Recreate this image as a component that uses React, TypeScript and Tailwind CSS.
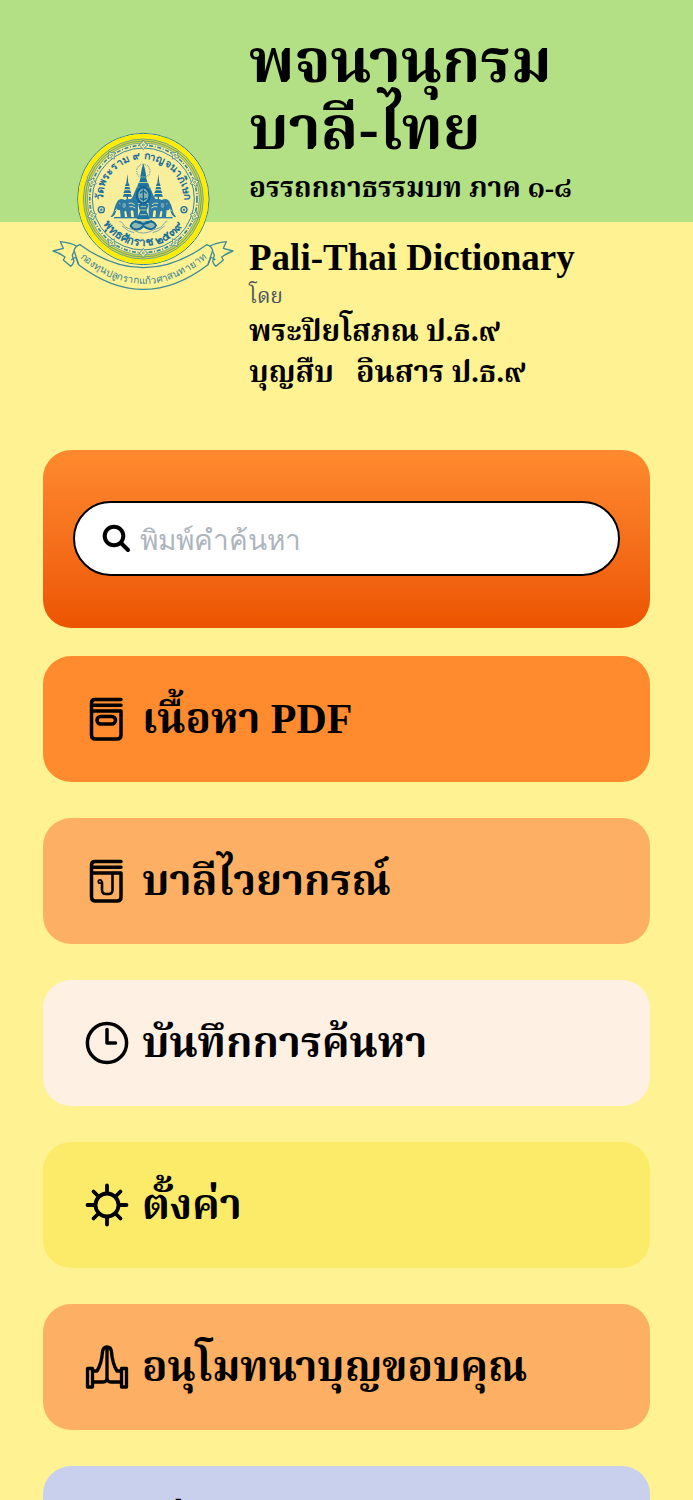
import React from "react";

const RIM_DOTS = Array.from({ length: 10 }, (_, i) => i * 36);

function Stupa({ x }: { x: number }) {
  return (
    <g transform={`translate(${x} 0)`} fill="#1d72a0">
      <path d="M0 162 L3 190 L-3 190 Z" />
      <path d="M-4 190h8l3 8h-14z M-6 201h12l3 7h-18z M-8 211h16l4 8h-24z M-10 222h20l4 8h-28z" />
      <path d="M-2 228h4v20h-4z" />
    </g>
  );
}

function Elephant({ flip }: { flip?: boolean }) {
  return (
    <g transform={flip ? "translate(620 0) scale(-1 1)" : undefined}>
      <path
        d="M230 248c4-12 16-14 24-8 14-6 30-2 40 10v42h-12l-2-18c-3-5-7-3-8 1l2 17h-12l-3-16c-2-5-5-4-6 0l2 16h-13l-2-22c-6 2-9-1-10-6-1 10-3 20-12 26-5 3-8 0-4-3 9-9 8-26 16-39z"
        fill="#2b7ba5"
      />
      <path d="M250 246q12 2 9 14-5 10-12 4-5-8 3-18z" fill="#6ea5b2" stroke="#0f6398" strokeWidth="2" />
      <path d="M266 250q10-3 18 4M268 260q10-2 18 4M238 250l3 2M230 268l-6 6" fill="none" stroke="#f7edb0" strokeWidth="2.500" />
      <path d="M222 293h76" stroke="#2b7ba5" strokeWidth="4" />
    </g>
  );
}

function Emblem() {
  return (
    <svg viewBox="36 36 546 474" className="mt-[132px] w-[182px] shrink-0" role="img" aria-label="ตราวัดพระราม ๙ กาญจนาภิเษก">
      <defs>
        <path id="arc-top" d="M190 262 A122 122 0 1 1 430 262" />
        <path id="arc-bottom" d="M168 237 A142 142 0 0 0 452 237" />
        <path id="arc-ribbon" d="M106 402 Q310 582 514 402" />
      </defs>
      <circle cx="310" cy="237" r="197" fill="#f8ee9c" stroke="#2a7f93" strokeWidth="3" />
      <circle cx="310" cy="237" r="188" fill="none" stroke="#ffec00" strokeWidth="14" />
      <circle cx="310" cy="237" r="174" fill="none" stroke="#d5d83b" strokeWidth="12" />
      <g fill="none" stroke="#3a8798">
        <circle cx="310" cy="237" r="180" strokeWidth="2" />
        <circle cx="310" cy="237" r="174" strokeWidth="2" />
        <circle cx="310" cy="237" r="168" strokeWidth="2" />
        <circle cx="310" cy="237" r="161" strokeWidth="5" strokeDasharray="12 5 3 5" />
        <circle cx="310" cy="237" r="153" strokeWidth="3" />
      </g>
      {RIM_DOTS.map((a) => (
        <g key={a} transform={`rotate(${a} 310 237)`} fill="#f8ee9c" stroke="#2f7f9f" strokeWidth="2">
          <path d="M310 61l6 9 8 5-8 5-6 9-6-9-8-5 8-5z" />
          <circle cx="310" cy="75" r="3" />
        </g>
      ))}
      <g fill="#1b6f9c" fontFamily="'Noto Sans', sans-serif" fontWeight="700">
        <text textAnchor="middle" fontSize="31">
          <textPath href="#arc-top" startOffset="50%">วัดพระราม ๙ กาญจนาภิเษก</textPath>
        </text>
        <text textAnchor="middle" fontSize="35">
          <textPath href="#arc-bottom" startOffset="50%">พุทธศักราช ๒๕๓๙</textPath>
        </text>
      </g>
      {[184, 432].map((x) => (
        <g key={x} fill="none" stroke="#1f729b">
          <circle cx={x} cy="269" r="9" strokeWidth="4" />
          <circle cx={x} cy="269" r="3" fill="#1f729b" />
        </g>
      ))}
      <circle cx="310" cy="153" r="20" fill="none" stroke="#5d9aab" strokeWidth="4" strokeDasharray="2 3" />
      <path d="M310 130l5 18 4 22h-18l4-22z" fill="#1f749f" />
      <path d="M302 172h16l4 14h-24z M296 188h28l5 14h-38z" fill="#1f749f" />
      <path d="M290 202h40l12 28 14 20h-92l14-20z" fill="#2b7ba5" />
      <ellipse cx="310" cy="226" rx="19" ry="24" fill="#83b3ad" stroke="#0f6398" strokeWidth="7" />
      <path d="M310 208v36M300 220q10-12 20 0M300 234q10 8 20 0" fill="none" stroke="#0f6398" strokeWidth="4" />
      <Stupa x={262} />
      <Stupa x={355} />
      <Elephant />
      <Elephant flip />
      <path d="M294 252h32l-6 22 10 24h-40l10-24z" fill="#1f749f" />
      <path d="M302 260h16M300 270h20M300 284h20" stroke="#f7edb0" strokeWidth="2" />
      <path
        d="M272 318c6-18 26-16 38-4 12-12 30-14 38 2-8 16-24 14-38 2-12 14-30 14-38 0zM284 302q26 18 52 0"
        fill="#8dbab0"
        stroke="#17699a"
        strokeWidth="6"
      />
      <path
        d="M238 304c12 2 10 12 20 18s20 4 30 12q22 10 44 0c10-8 20-6 30-12s8-16 20-18M246 318q20 18 36 20M374 318q-20 18-36 20"
        fill="none"
        stroke="#83aaa5"
        strokeWidth="3"
      />
      <g fill="#fff292" stroke="#3d8a9a" strokeWidth="4" strokeLinejoin="round">
        <path d="M120 374q-16 12-23 32l5 18q-4 12-10 15l-22-19 5-9q-17-12-36-18l31-8-9-20q32 3 51 15z" />
        <path d="M500 374q16 12 23 32l-5 18q4 12 10 15l22-19-5-9q17-12 34-18l-29-8 9-20q-32 3-51 15z" />
        <path d="M120 374Q310 512 500 374q14 4 18 17l-14 43Q310 582 116 434l-14-43q4-13 18-17z" />
        <path d="M116 434l-8-21q-8-1-14 7M504 434l8-21q8-1 14 7" fill="none" />
      </g>
      <text fill="#347f99" fontFamily="'Noto Sans', sans-serif" fontSize="30" fontWeight="500" textAnchor="middle">
        <textPath href="#arc-ribbon" startOffset="50%">กองทุนปลูกรากแก้วศาสนทายาท</textPath>
      </text>
    </svg>
  );
}

function BookIcon({ children }: { children: React.ReactNode }) {
  return (
    <svg viewBox="0 0 44 44" className="size-11 shrink-0" fill="none" stroke="black" strokeWidth="3.500" strokeLinecap="round" strokeLinejoin="round" aria-hidden="true">
      <path d="M36 2.500H10Q6.500 2.500 6.500 6V38Q6.500 42 10.500 42H32Q36 42 36 38V14H7M8 8.200H36" />
      {children}
    </svg>
  );
}

function PdfBookIcon() {
  return (
    <BookIcon>
      <rect x="12" y="19.500" width="18.500" height="7.500" rx="3.700" />
    </BookIcon>
  );
}

function PaliBookIcon() {
  return (
    <BookIcon>
      <circle cx="15" cy="22.500" r="1.700" strokeWidth="1.700" />
      <path d="M17 23.500V31Q17 35 21 35H23.500Q27.500 35 27.500 31V14" strokeWidth="2.600" />
    </BookIcon>
  );
}

function ClockIcon() {
  return (
    <svg viewBox="0 0 44 44" className="size-11 shrink-0" fill="none" stroke="black" strokeWidth="3.500" strokeLinecap="round" strokeLinejoin="round" aria-hidden="true">
      <circle cx="22" cy="22" r="19.600" />
      <path d="M22 8.500V22H30.500" />
    </svg>
  );
}

function SunIcon() {
  return (
    <svg viewBox="0 0 44 44" className="size-11 shrink-0" fill="none" stroke="black" strokeWidth="3.800" strokeLinecap="round" aria-hidden="true">
      <circle cx="22" cy="22" r="11.500" />
      <path d="M22 2.500V10M22 34V41.500M2.500 22H10M34 22H41.500M8.500 8.500L13 13M31 31L35.500 35.500M35.500 8.500L31 13M13 31L8.500 35.500" />
    </svg>
  );
}

function PrayIcon() {
  return (
    <svg viewBox="0 0 44 44" className="size-11 shrink-0" fill="none" stroke="black" strokeWidth="3.300" strokeLinejoin="round" aria-hidden="true">
      <path d="M2.500 23.500H7.500V42H2.500ZM36.500 23.500H41.500V42H36.500Z" />
      <path d="M7.500 26H12Q16.500 19 17.500 7Q18 2 22 2Q26 2 26.500 7Q27.500 19 32 26H36.500M7.500 37H18Q22 37 22 32.500V3M36.500 37H26Q22 37 22 32.500" />
    </svg>
  );
}

function InfoIcon() {
  return (
    <svg viewBox="0 0 44 44" className="size-11 shrink-0" fill="none" stroke="black" strokeWidth="3.500" strokeLinecap="round" aria-hidden="true">
      <circle cx="22" cy="22" r="19" />
      <path d="M22 20V31M22 13V13.500" />
    </svg>
  );
}

const MENU = [
  { label: "เนื้อหา PDF", href: "#content", color: "bg-[#ff8b2e]", Icon: PdfBookIcon },
  { label: "บาลีไวยากรณ์", href: "#grammar", color: "bg-[#fdb063]", Icon: PaliBookIcon },
  { label: "บันทึกการค้นหา", href: "#history", color: "bg-[#fff0e4]", Icon: ClockIcon },
  { label: "ตั้งค่า", href: "#settings", color: "bg-[#fbeb69]", Icon: SunIcon },
  { label: "อนุโมทนาบุญขอบคุณ", href: "#thanks", color: "bg-[#fdb063]", Icon: PrayIcon },
  { label: "เกี่ยวกับพจนานุกรม", href: "#about", color: "bg-[#c8d0ee]", Icon: InfoIcon },
];

export default function App() {
  return (
    <div className="min-h-screen bg-[linear-gradient(#b3e085_0_222px,#fff292_222px)] font-['Liberation_Serif','Noto_Serif_Thai',serif] text-black">
      <header className="flex items-start gap-[15px] pb-[58px] pl-[52px]">
        <Emblem />
        <div className="whitespace-nowrap pt-7">
          <h1 className="text-[61px] leading-[67px] font-bold">
            พจนานุกรม
            <br />
            บาลี-ไทย
          </h1>
          <p className="mt-1 text-[28px] leading-[44px] font-bold">อรรถกถาธรรมบท ภาค ๑-๘</p>
          <p className="mt-6 text-[37px] leading-[48px] font-bold">Pali-Thai Dictionary</p>
          <p className="text-[21px] leading-[28px] text-[#4b5563]">โดย</p>
          <p className="text-[30px] leading-[41px] font-bold">พระปิยโสภณ ป.ธ.๙</p>
          <p className="text-[30px] leading-[41px] font-bold whitespace-pre">บุญสืบ   อินสาร ป.ธ.๙</p>
        </div>
      </header>
      <main className="mx-[43px] pb-9">
        <form className="rounded-[28px] bg-linear-to-b from-[#ff8a2e] to-[#ec5400] px-[30px] pt-[51px] pb-[52px]" onSubmit={(e) => e.preventDefault()}>
          <label className="flex h-[75px] items-center gap-2 rounded-full border-2 border-black bg-white pr-7 pl-[27px]">
            <svg viewBox="0 0 30 30" className="size-[30px] shrink-0" fill="none" stroke="black" strokeWidth="4" strokeLinecap="round" aria-hidden="true">
              <circle cx="12" cy="12" r="9.300" />
              <path d="M19 19L26 26" />
            </svg>
            <input
              type="search"
              aria-label="ค้นหา"
              placeholder="พิมพ์คำค้นหา"
              className="h-full min-w-0 flex-1 bg-transparent font-['Noto_Sans',sans-serif] text-[28px] outline-none placeholder:text-[#adb5bd]"
            />
          </label>
        </form>
        <nav className="mt-7 flex flex-col gap-9">
          {MENU.map(({ label, href, color, Icon }) => (
            <a key={href} href={href} className={`flex h-[126px] items-center gap-[13px] rounded-[28px] px-[42px] text-[42px] font-bold whitespace-nowrap ${color}`}>
              <Icon />
              {label}
            </a>
          ))}
        </nav>
      </main>
    </div>
  );
}
